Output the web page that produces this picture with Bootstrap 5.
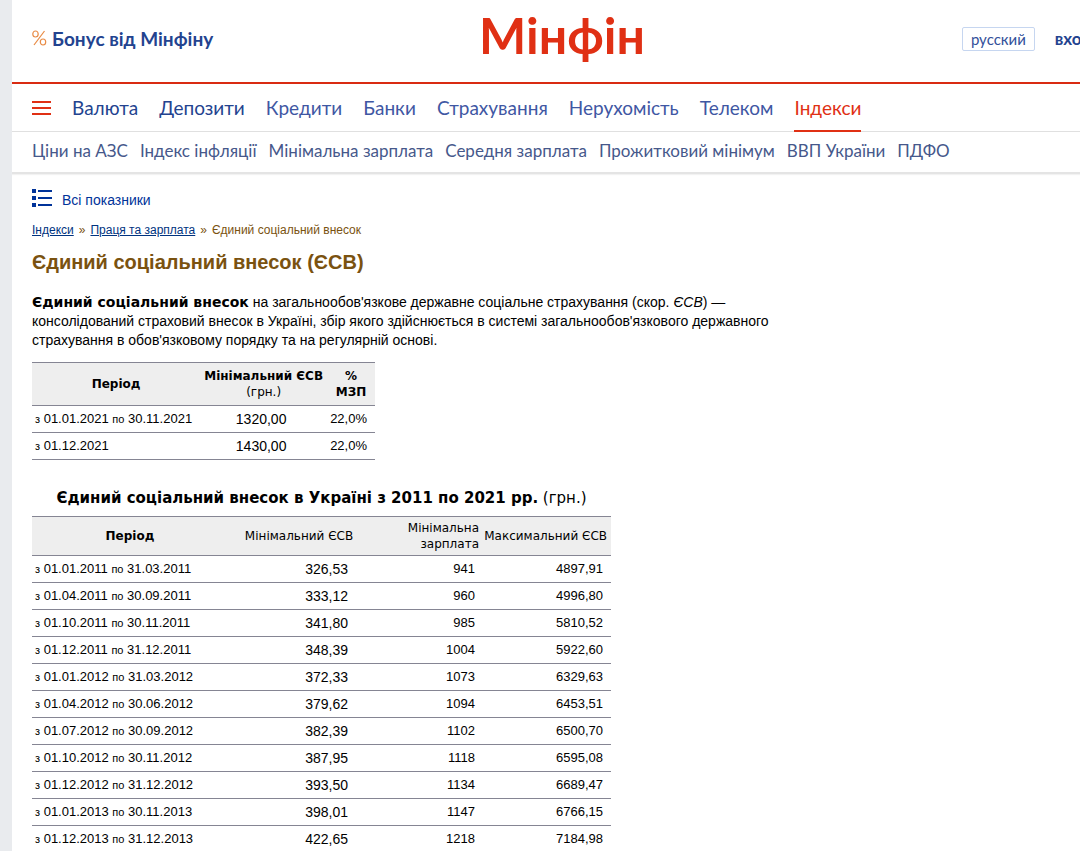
<!DOCTYPE html>
<html lang="uk">
<head>
<meta charset="utf-8">
<meta name="viewport" content="width=device-width, initial-scale=1">
<title>Єдиний соціальний внесок (ЄСВ)</title>
<link href="https://cdn.jsdelivr.net/npm/bootstrap@5.3.0/dist/css/bootstrap.min.css" rel="stylesheet">
<style>
  body { background: #e9ebee; color: #000; font: 14px/19px "Liberation Sans", Arial, sans-serif; overflow-x: hidden; }
  body::-webkit-scrollbar { display: none; }
  .site { margin-left: 12px; min-width: 1100px; min-height: 100vh; background: #fff; }
  .site-header { display: grid; grid-template-columns: 1fr auto 1fr; height: 84px; padding-bottom: 4px; border-bottom: 2px solid #d92b12; font-family: Lato, sans-serif; }
  .bonus { color: #23438f; font-size: 19px; line-height: 24px; font-weight: 700; }
  .logo { color: #e03014; font: 700 50px/60px Lato, sans-serif; padding-bottom: 8px; }
  .lang { color: #33509a; font-size: 15px; line-height: 20px; border: 1px solid #c6d6f0; border-radius: 2px; padding: 1px 8px; }
  .login { color: #23438f; font-size: 17px; line-height: 20px; font-weight: 700; }
  .main-nav { height: 48px; gap: 21px; border-bottom: 1px solid #e0e0e0; font: 19px/24px Lato, sans-serif; }
  .main-nav a { color: #3f57a3; height: 48px; padding-top: 12px; white-space: nowrap; }
  .main-nav a.strong-link { color: #23438f; }
  .main-nav a.active { color: #e03014; border-bottom: 2px solid #e03014; }
  .sub-nav { height: 42px; gap: 12px; padding-bottom: 2px; border-bottom: 2px solid #e4e4e4; box-shadow: 0 1px 1px #f2f2f2; font: 17px/24px Lato, sans-serif; }
  .sub-nav a { color: #46588b; white-space: nowrap; }
  .burger { width: 19px; }
  .content { padding-top: 15px; }
  .all-link { color: #039; gap: 10px; margin-bottom: 15px; }
  .crumbs { font-size: 12px; line-height: 16px; color: #7a5210; gap: 5px; }
  .crumbs a { color: #003380; }
  h1 { font-size: 20px; line-height: 24px; font-weight: 700; color: #7a5210; margin: 12px 0 19px; }
  .intro { width: 750px; margin-bottom: 12px; }
  .intro b, .stat { font-family: "DejaVu Sans", Verdana, sans-serif; }
  .stat { border-collapse: collapse; table-layout: fixed; font-size: 12px; line-height: 16px; }
  .stat caption { caption-side: top; color: #000; padding: 0; text-align: center; font-size: 15px; line-height: 20px; white-space: nowrap; }
  .stat th { background: #eee; font-weight: 400; vertical-align: middle; text-align: center; }
  .stat tr { border-top: 1px solid #858593; border-bottom: 1px solid #858593; }
  .stat td { height: 27px; padding: 0 8px 0 3px; text-align: right; font: 13px/16px "Liberation Sans", Arial, sans-serif; white-space: nowrap; }
  .stat td:first-child { text-align: left; }
  .stat small { font-size: 11px; }
  .stat td:nth-child(2) { font-size: 14px; }
  .history td:nth-child(2) { padding-right: 22px; }
</style>
</head>
<body>
<div class="site">
  <header class="site-header align-items-center px-3">
    <a href="#" class="bonus d-flex align-items-center text-decoration-none ms-1">
      <svg class="me-1" width="16" height="20" viewBox="0 0 16 20" fill="none" stroke="#e98b45" stroke-width="1.2" aria-hidden="true"><ellipse cx="3.500" cy="5" rx="2.700" ry="3"/><ellipse cx="11" cy="13" rx="2.700" ry="3"/><path d="M12.500 2 2 16"/></svg>Бонус від Мінфіну
    </a>
    <a href="#" class="logo text-decoration-none">Мінфін</a>
    <div class="d-flex align-items-center justify-content-end me-1">
      <a href="#" class="lang text-decoration-none me-3">русский</a>
      <a href="#" class="login text-decoration-none ms-1">вход</a>
    </div>
  </header>
  <nav class="main-nav d-flex px-3" aria-label="Розділи">
    <button type="button" class="burger border-0 bg-transparent p-0 ms-1 d-flex align-items-center" aria-label="Меню">
      <svg width="19" height="14" fill="#e03014"><path d="M0 0h19v2H0zM0 6h19v2H0zM0 12h19v2H0z"/></svg>
    </button>
    <a class="strong-link text-decoration-none" href="#">Валюта</a>
    <a class="strong-link text-decoration-none" href="#">Депозити</a>
    <a class="text-decoration-none" href="#">Кредити</a>
    <a class="text-decoration-none" href="#">Банки</a>
    <a class="text-decoration-none" href="#">Страхування</a>
    <a class="text-decoration-none" href="#">Нерухомість</a>
    <a class="text-decoration-none" href="#">Телеком</a>
    <a class="text-decoration-none active" href="#">Індекси</a>
  </nav>
  <nav class="sub-nav d-flex align-items-center" aria-label="Індекси">
    <a class="text-decoration-none ps-1 ms-3" href="#">Ціни на АЗС</a>
    <a class="text-decoration-none" href="#">Індекс інфляції</a>
    <a class="text-decoration-none" href="#">Мінімальна зарплата</a>
    <a class="text-decoration-none" href="#">Середня зарплата</a>
    <a class="text-decoration-none" href="#">Прожитковий мінімум</a>
    <a class="text-decoration-none" href="#">ВВП України</a>
    <a class="text-decoration-none" href="#">ПДФО</a>
  </nav>
  <main class="content px-3">
   <div class="ps-1">
    <a href="#" class="all-link d-flex align-items-start text-decoration-none">
      <svg width="20" height="18" fill="#039" aria-hidden="true"><path d="M0 0h4v4H0zM0 7h4v4H0zM0 14h4v4H0zM6 1h14v2H6zM6 8h14v2H6zM6 15h14v2H6z"/></svg>
      <span class="pt-1 lh-1">Всі показники</span>
    </a>
    <nav class="crumbs d-flex" aria-label="Шлях">
      <a href="#">Індекси</a><span>»</span><a href="#">Праця та зарплата</a><span>»</span><span>Єдиний соціальний внесок</span>
    </nav>
    <h1>Єдиний соціальний внесок (ЄСВ)</h1>
    <p class="intro"><b>Єдиний соціальний внесок</b> на загальнообов'язкове державне соціальне страхування (скор. <i>ЄСВ</i>) — консолідований страховий внесок в Україні, збір якого здійснюється в системі загальнообов'язкового державного страхування в обов'язковому порядку та на регулярній основі.</p>

    <table class="stat mb-4">
      <colgroup><col width="168"><col width="127"><col width="47"></colgroup>
      <thead><tr><th height="43"><b>Період</b></th><th class="text-nowrap"><b>Мінімальний ЄСВ</b><br>(грн.)</th><th><b>% МЗП</b></th></tr></thead>
      <tbody>
        <tr><td><small>з</small> 01.01.2021 <small>по</small> 30.11.2021</td><td class="text-center">1320,00</td><td>22,0%</td></tr>
        <tr><td><small>з</small> 01.12.2021</td><td class="text-center">1430,00</td><td>22,0%</td></tr>
      </tbody>
    </table>

    <table class="stat history">
      <caption class="pt-1 pb-2"><b>Єдиний соціальний внесок в Україні з 2011 по 2021 рр.</b> (грн.)</caption>
      <colgroup><col width="196"><col width="142"><col width="113"><col width="128"></colgroup>
      <thead><tr><th height="39"><b>Період</b></th><th>Мінімальний ЄСВ</th><th class="text-end pe-1">Мінімальна зарплата</th><th class="text-end pe-1">Максимальний ЄСВ</th></tr></thead>
      <tbody>
        <tr><td><small>з</small> 01.01.2011 <small>по</small> 31.03.2011</td><td>326,53</td><td>941</td><td>4897,91</td></tr>
        <tr><td><small>з</small> 01.04.2011 <small>по</small> 30.09.2011</td><td>333,12</td><td>960</td><td>4996,80</td></tr>
        <tr><td><small>з</small> 01.10.2011 <small>по</small> 30.11.2011</td><td>341,80</td><td>985</td><td>5810,52</td></tr>
        <tr><td><small>з</small> 01.12.2011 <small>по</small> 31.12.2011</td><td>348,39</td><td>1004</td><td>5922,60</td></tr>
        <tr><td><small>з</small> 01.01.2012 <small>по</small> 31.03.2012</td><td>372,33</td><td>1073</td><td>6329,63</td></tr>
        <tr><td><small>з</small> 01.04.2012 <small>по</small> 30.06.2012</td><td>379,62</td><td>1094</td><td>6453,51</td></tr>
        <tr><td><small>з</small> 01.07.2012 <small>по</small> 30.09.2012</td><td>382,39</td><td>1102</td><td>6500,70</td></tr>
        <tr><td><small>з</small> 01.10.2012 <small>по</small> 30.11.2012</td><td>387,95</td><td>1118</td><td>6595,08</td></tr>
        <tr><td><small>з</small> 01.12.2012 <small>по</small> 31.12.2012</td><td>393,50</td><td>1134</td><td>6689,47</td></tr>
        <tr><td><small>з</small> 01.01.2013 <small>по</small> 30.11.2013</td><td>398,01</td><td>1147</td><td>6766,15</td></tr>
        <tr><td><small>з</small> 01.12.2013 <small>по</small> 31.12.2013</td><td>422,65</td><td>1218</td><td>7184,98</td></tr>
      </tbody>
    </table>
   </div>
  </main>
</div>
<script src="https://cdn.jsdelivr.net/npm/bootstrap@5.3.0/dist/js/bootstrap.bundle.min.js"></script>
</body>
</html>
